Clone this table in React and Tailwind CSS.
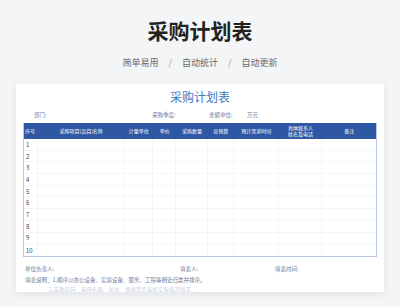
import React from "react";

const cols = [
    { label: "序号", w: "w-[14px]", align: "justify-start pl-[1px]" },
    { label: "采购项目(品目)名称", w: "w-[87px]", align: "justify-center" },
    { label: "计量单位", w: "w-[29px]", align: "justify-center" },
    { label: "单价", w: "w-[23px]", align: "justify-center" },
    { label: "采购数量", w: "w-[32px]", align: "justify-center" },
    { label: "总预算", w: "w-[26px]", align: "justify-center" },
    { label: "预计需求时间", w: "w-[45px]", align: "justify-center" },
    { label: "具体联系人\n姓名及电话", w: "w-[44px]", align: "justify-center" },
    { label: "备注", w: "w-[54px]", align: "justify-center" },
];

const rows = [1, 2, 3, 4, 5, 6, 7, 8, 9, 10];

const App = () => {
    return (
        <div
            className="w-[400px] h-[307px] bg-[#f4f5f7] flex flex-col items-center overflow-hidden"
            style={{ fontFamily: '"Noto Sans CJK SC", "Noto Sans", sans-serif' }}
        >
            <h1 className="mt-[17px] text-[21px] leading-[26px] font-bold text-[#222]">
                采购计划表
            </h1>
            <div className="mt-[14px] flex items-center gap-[10px] text-[9px] leading-[12px] text-[#666]">
                <span>简单易用</span>
                <span className="text-[#999]">/</span>
                <span>自动统计</span>
                <span className="text-[#999]">/</span>
                <span>自动更新</span>
            </div>

            <div className="mt-[15px] w-[368px] h-[208px] bg-white shadow-[0_2px_8px_rgba(0,0,0,0.08)] overflow-hidden flex flex-col px-[7px]">
                <div className="mt-[5px] text-center text-[12px] leading-[16px] text-[#3b78c0]">
                    采购计划表
                </div>
                <div className="mt-[6px] flex text-[5.5px] leading-[8px] text-[#6b7b9c]">
                    <span className="ml-[11px] w-[118px]">部门:</span>
                    <span className="w-[57px]">采购季度:</span>
                    <span className="w-[38px]">金额单位:</span>
                    <span>万元</span>
                </div>

                <div className="mt-[4px] border-x-[1.5px] border-b-[1.5px] border-[#b6c8e4]">
                    <div className="flex h-[16px] bg-[#2e58a3] text-white text-[5px] leading-[6px]">
                        {cols.map((c) => (
                            <div
                                key={c.label}
                                className={`${c.w} flex items-center ${c.align} text-center whitespace-pre-line`}
                            >
                                {c.label}
                            </div>
                        ))}
                    </div>
                    {rows.map((r) => (
                        <div
                            key={r}
                            className="flex h-[11.7px] border-b border-[#f3f5f9] last:border-b-0 text-[6px] text-[#444]"
                        >
                            {cols.map((c, i) => (
                                <div
                                    key={c.label}
                                    className={`${c.w} flex items-center pl-[2px] border-r border-[#f3f5f9] last:border-r-0`}
                                >
                                    {i === 0 ? r : ""}
                                </div>
                            ))}
                        </div>
                    ))}
                </div>

                <div className="mt-[8px] flex text-[5.5px] leading-[8px] text-[#6b7b9c]">
                    <span className="ml-[2px] w-[155px]">单位负责人:</span>
                    <span className="w-[95px]">填表人:</span>
                    <span>填表时间:</span>
                </div>
                <div className="mt-[3px] ml-[2px] text-[5.5px] leading-[8px] text-[#6b7b9c]">
                    填表说明：1.顺序以办公设备、实验设备、服务、工程等相近归类并排序。
                </div>
                <div className="mt-[2px] ml-[26px] text-[5.5px] leading-[8px] text-[#c9d1e0]">
                    2.采购项目、品目名称、单位、规格型号等按实际情况填写。
                </div>
            </div>
        </div>
    );
};

export default App;
